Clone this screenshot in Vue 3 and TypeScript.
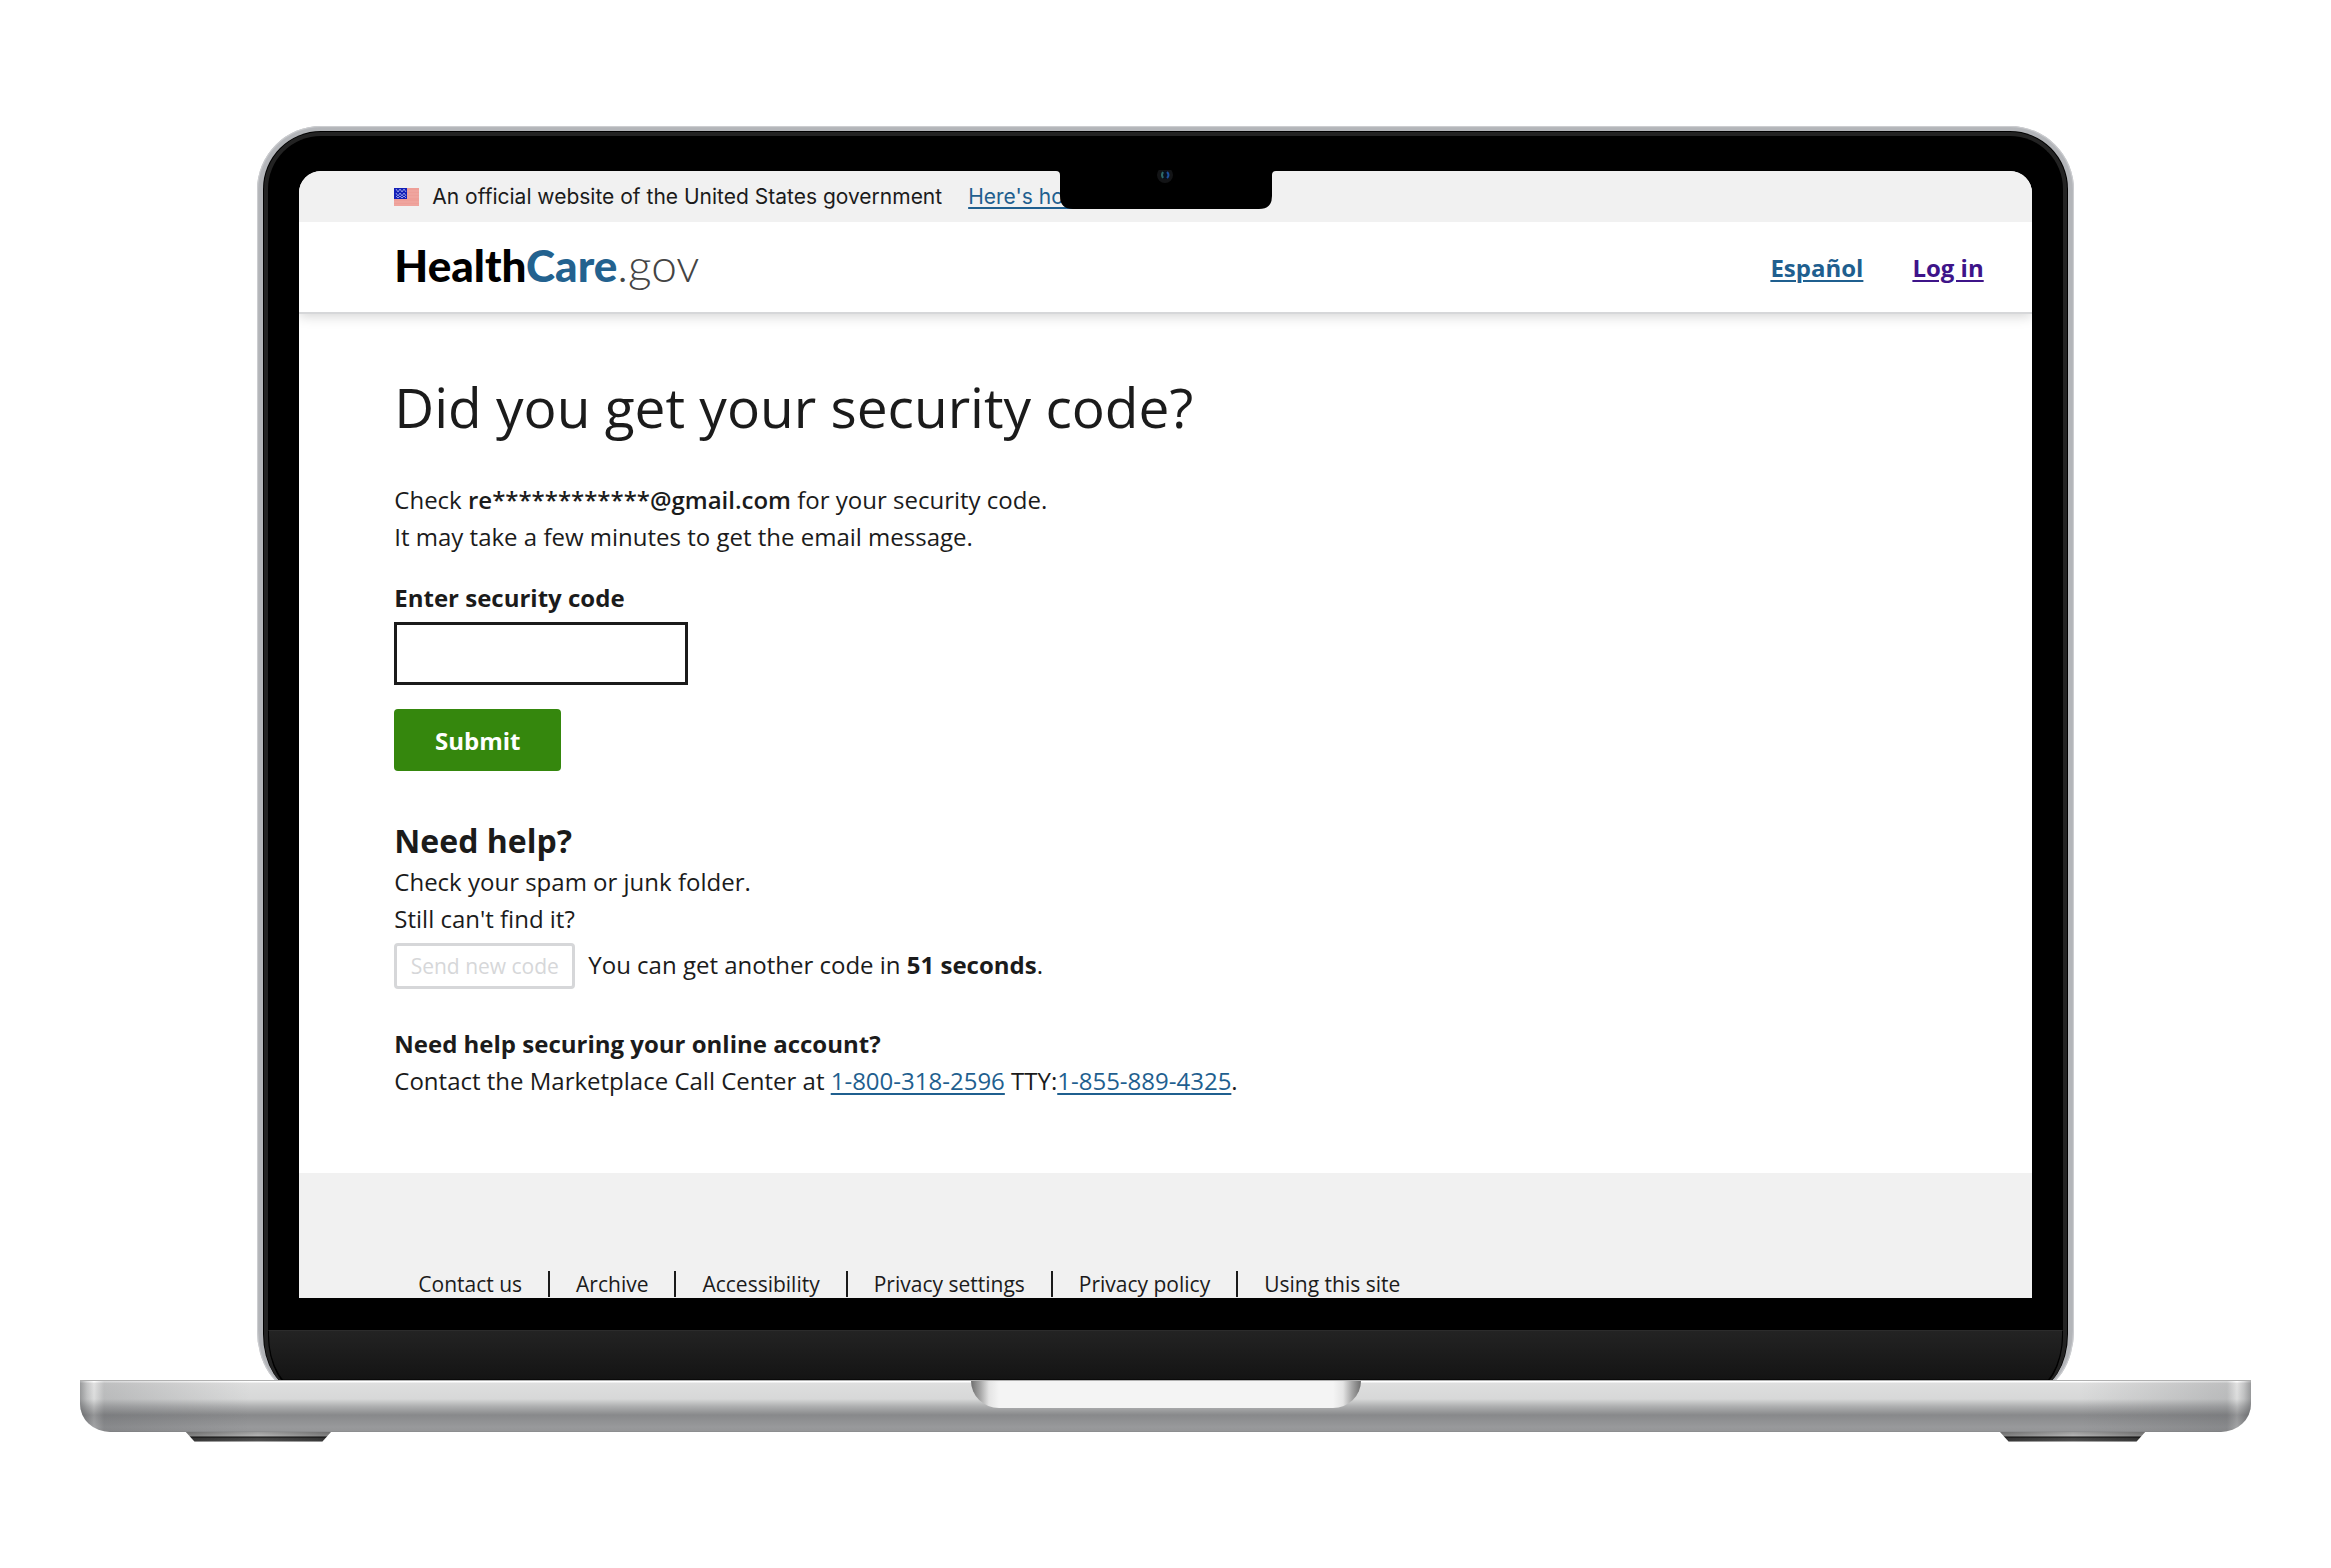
<script setup lang="ts">
import { ref } from 'vue'

const code = ref('')
const secondsLeft = ref(51)
const maskedEmail = 're************@gmail.com'
const footerLinks: string[] = [
  'Contact us',
  'Archive',
  'Accessibility',
  'Privacy settings',
  'Privacy policy',
  'Using this site',
]
</script>

<template>
  <div class="stage">
    <div class="laptop">
      <div class="lid">
        <div class="rim">
          <div class="bezel">
            <div class="screen">
              <div class="banner">
                <svg class="flag" viewBox="0 0 25 18" aria-hidden="true">
                  <rect width="25" height="18" fill="#ee9f98" />
                  <path d="M13 3h12M13 6h12M13 9h12M0 14h25M0 17h25" stroke="#f0aaa4" stroke-width="1" />
                  <rect width="13" height="11" fill="#1420b8" />
                  <path d="M2 1l2 3 2-3 2 3 2-3 2 3M2 5l2 3 2-3 2 3 2-3 2 3M2 8l2 2 2-2 2 2 2-2 2 2" fill="none" stroke="#8f98e4" stroke-width="1" />
                </svg>
                <span>An official website of the United States government</span>
                <a class="how" href="#">Here's how you know</a>
              </div>

              <header class="header">
                <a class="logo" href="#"><b>Health</b><b class="care">Care</b><span class="gov">.gov</span></a>
                <nav class="account">
                  <a href="#">Español</a>
                  <a class="visited" href="#">Log in</a>
                </nav>
              </header>

              <main class="main">
                <h1>Did you get your security code?</h1>
                <p>
                  Check <strong class="email">{{ maskedEmail }}</strong> for your security code.<br />
                  It may take a few minutes to get the email message.
                </p>
                <form class="form" @submit.prevent>
                  <label for="code">Enter security code</label>
                  <input id="code" v-model="code" type="text" autocomplete="one-time-code" />
                  <button class="submit" type="submit">Submit</button>
                </form>

                <h2>Need help?</h2>
                <p>Check your spam or junk folder.<br />Still can't find it?</p>
                <div class="resend">
                  <button type="button" disabled>Send new code</button>
                  <span>You can get another code in <strong>{{ secondsLeft }} seconds</strong>.</span>
                </div>

                <h3>Need help securing your online account?</h3>
                <p>
                  Contact the Marketplace Call Center at <a href="tel:1-800-318-2596">1-800-318-2596</a>
                  TTY:<a href="tel:1-855-889-4325">1-855-889-4325</a>.
                </p>
              </main>

              <footer class="footer">
                <ul>
                  <li v-for="link in footerLinks" :key="link"><a href="#">{{ link }}</a></li>
                </ul>
              </footer>
            </div>
            <svg class="notch" viewBox="0 0 220 39" aria-hidden="true">
              <path d="M0 0H220V1Q216 1 216 5V26Q216 39 203 39H17Q4 39 4 26V5Q4 1 0 1Z" fill="#000" />
              <circle cx="109" cy="5" r="8" fill="#131416" />
              <circle cx="109" cy="5" r="4" fill="#06101f" />
              <path d="M107 2Q105 5 107 8" stroke="#2e6a68" stroke-width="2" fill="none" />
              <path d="M111 2Q114 5 111 8" stroke="#1c4f9c" stroke-width="2" fill="none" />
            </svg>
            <div class="chin"></div>
          </div>
        </div>
      </div>

      <div class="base"><div class="lip"></div></div>
      <div class="feet"><i></i><i></i></div>
    </div>
  </div>
</template>

<style>
body {
  background: #fff;
}
</style>

<style scoped>
* {
  box-sizing: border-box;
}
.stage {
  padding: 126px 0 96px;
  color: #1b1b1b;
  font: 24px/37px "Open Sans", sans-serif;
}
.laptop {
  width: 93.1%;
  margin: 0 auto;
}

/* Lid */
.lid {
  width: 83.7%;
  margin: 0 auto -10px;
  padding: 5px 6px 0;
  border-radius: 64px 64px 40px 40px / 64px 64px 60px 60px;
  background: #b3b5b9;
  box-shadow: inset 0 0 1px 1px #cfd0d3;
}
.rim {
  padding: 1px 1px 0;
  border-radius: 58px 58px 36px 36px / 58px 58px 56px 56px;
  background: #000;
}
.bezel {
  position: relative;
  padding: 35px 31px 0;
  border: 4px solid #232323;
  border-bottom: 0;
  border-radius: 57px 57px 35px 35px / 57px 57px 55px 55px;
  background: #000;
  overflow: hidden;
}
.screen {
  display: flex;
  flex-direction: column;
  aspect-ratio: 1733 / 1127;
  overflow: hidden;
  border-radius: 22px 22px 0 0;
  background: #fff;
}
.notch {
  position: absolute;
  z-index: 2;
  top: 34px;
  left: 50%;
  width: 220px;
  height: 39px;
  transform: translateX(-50%);
}
.chin {
  height: 60px;
  margin: 32px -31px 0;
  border-top: 1px solid #2c2c2c;
  border-left: 1px solid #000;
  border-right: 1px solid #000;
  border-radius: 0 0 35px 35px / 0 0 55px 55px;
  background: linear-gradient(#232323, #141414 48px, #000 49px);
}

/* Keyboard deck */
.base {
  position: relative;
  height: 52px;
  border-top: 1px solid #b0b0b0;
  border-radius: 0 0 30px 30px / 0 0 28px 28px;
  background:
    linear-gradient(90deg, rgba(70, 72, 75, 0.45), rgba(90, 92, 95, 0.2) 7px, rgba(255, 255, 255, 0.1) 14px, rgba(80, 82, 86, 0.22) 24px, rgba(80, 82, 86, 0.2) 40px, transparent 170px, transparent calc(100% - 170px), rgba(80, 82, 86, 0.2) calc(100% - 40px), rgba(80, 82, 86, 0.22) calc(100% - 24px), rgba(255, 255, 255, 0.1) calc(100% - 14px), rgba(90, 92, 95, 0.2) calc(100% - 7px), rgba(70, 72, 75, 0.45)),
    linear-gradient(#fff 1px, #dedede 2px, #d7d8d8 18px, #b0b1b2 25px, #88898b 34px, #98999b 46px, #959698 50px, #858688);
}
.lip {
  width: 390px;
  height: 27px;
  margin: 0 auto;
  border-radius: 0 0 28px 28px / 0 0 27px 27px;
  background: linear-gradient(90deg, #6e6e6e, #a5a5a5 9px, #e4e4e4 18px, #f4f4f4 28px, #f4f4f4 calc(100% - 28px), #e4e4e4 calc(100% - 18px), #a5a5a5 calc(100% - 9px), #6e6e6e);
}
.feet {
  display: flex;
  justify-content: space-between;
  padding: 0 105px;
}
.feet i {
  width: 146px;
  height: 10px;
  clip-path: polygon(0 0, 100% 0, 137px 100%, 9px 100%);
  background:
    linear-gradient(90deg, rgba(0, 0, 0, 0.3), transparent 50%, rgba(0, 0, 0, 0.3)),
    linear-gradient(#9b9b9b, #b5b5b5 4px, #111 5px, #444 6px, #555 10px);
}

/* Page */
a {
  color: #1f5f8f;
  text-decoration-thickness: 2px;
  text-underline-offset: 3px;
}
.banner {
  position: relative;
  z-index: 1;
  display: flex;
  flex: none;
  align-items: center;
  height: 51px;
  padding-left: 95px;
  background: #f1f1f1;
  font-family: Inter, sans-serif;
  font-size: 21px;
  white-space: nowrap;
}
.flag {
  width: 25px;
  height: 18px;
  margin-right: 13px;
}
.how {
  margin-left: 26px;
}
.header {
  position: relative;
  display: flex;
  flex: none;
  align-items: center;
  justify-content: space-between;
  height: 92px;
  padding: 0 48px 0 95px;
  border-bottom: 2px solid #d6d7d9;
  box-shadow: 0 2px 12px rgba(0, 0, 0, 0.18);
}
.logo {
  padding-bottom: 4px;
  color: #000;
  font-family: Lato, sans-serif;
  font-size: 44px;
  font-weight: 300;
  line-height: 50px;
  text-decoration: none;
}
.logo b {
  font-weight: 900;
}
.care {
  color: #23628f;
}
.gov {
  color: #444;
  font-size: 46px;
}
.account {
  display: flex;
  gap: 49px;
  font-weight: 700;
}
.account .visited {
  color: #3e1489;
}
.main {
  flex: none;
  padding: 57px 95px 74px;
}
h1,
h2,
h3,
p {
  margin: 0;
}
h1 {
  margin-bottom: 38px;
  font-size: 55px;
  line-height: 72px;
  font-weight: 400;
}
h2 {
  margin-top: 48px;
  font-size: 32px;
  line-height: 44px;
}
h3 {
  margin-top: 36px;
  font-size: 24px;
}
.email {
  font-weight: 600;
}
.form {
  display: flex;
  flex-direction: column;
  align-items: flex-start;
  margin-top: 24px;
}
label {
  font-weight: 700;
}
input {
  width: 294px;
  height: 63px;
  margin: 6px 0 24px;
  padding: 0 12px;
  border: 3px solid #1b1b1b;
  border-radius: 0;
  background: #fff;
  font: inherit;
}
button {
  font: inherit;
}
.submit {
  width: 167px;
  height: 62px;
  border: 0;
  border-radius: 4px;
  background: #35870d;
  color: #fff;
  font-weight: 700;
}
.resend {
  display: flex;
  align-items: baseline;
  gap: 13px;
  margin-top: 6px;
}
.resend button {
  width: 181px;
  height: 46px;
  padding: 0;
  border: 3px solid #d6d7d9;
  border-radius: 4px;
  background: #fff;
  color: #d6d7d9;
  font-size: 21px;
}
.footer {
  flex: 1 0 auto;
  padding: 98px 93px 0;
  background: #f1f1f1;
}
.footer ul {
  display: flex;
  margin: 0;
  padding: 0;
  list-style: none;
  font-size: 21px;
  line-height: 26px;
}
.footer li {
  padding: 0 26px;
}
.footer li + li {
  border-left: 2px solid #1b1b1b;
}
.footer a {
  color: #1b1b1b;
  text-decoration: none;
}
</style>
